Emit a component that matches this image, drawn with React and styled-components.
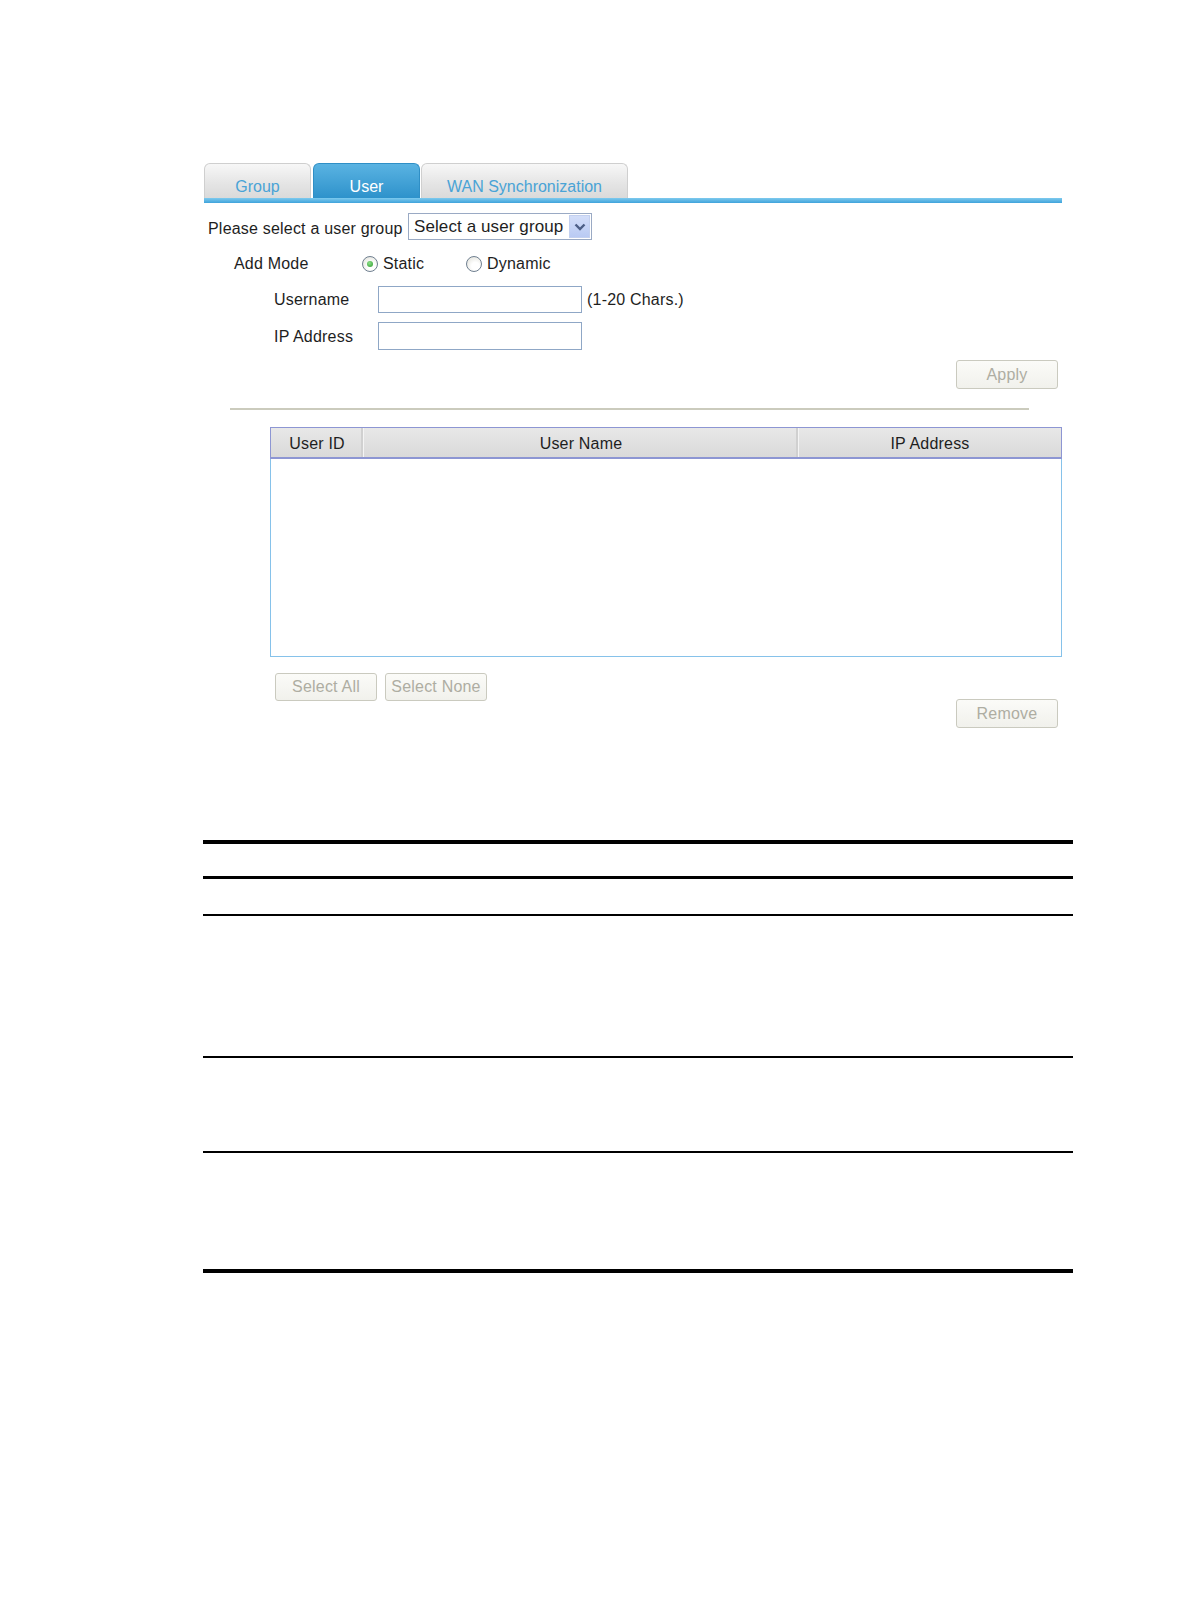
import React from 'react';
import styled, { createGlobalStyle } from 'styled-components';

const Global = createGlobalStyle`
  body {
    margin: 0;
    background: #fff;
    font-family: "Liberation Sans", Arial, sans-serif;
    color: #1e1e1e;
  }
`;

const Page = styled.div`
  padding-top: 163px;
  padding-bottom: 300px;
`;

const Panel = styled.div`
  margin-left: 204px;
  width: 858px;
  font-size: 16px;
  letter-spacing: 0.2px;
`;

const TabBar = styled.div`
  display: flex;
  align-items: flex-end;
  height: 35px;
`;

const Tab = styled.div`
  box-sizing: border-box;
  width: ${p => p.$w}px;
  height: 35px;
  margin-right: ${p => p.$gap || 0}px;
  padding-top: 14px;
  text-align: center;
  letter-spacing: 0;
  border: 1px solid ${p => (p.$active ? '#2f8fc6' : '#cfcfcf')};
  border-bottom: none;
  border-radius: 6px 6px 0 0;
  color: ${p => (p.$active ? '#fff' : '#4aa3d6')};
  background: ${p =>
    p.$active
      ? 'linear-gradient(#5ab3e2, #2e92cb)'
      : 'linear-gradient(#f7f7f7, #e4e4e4 60%, #dadada)'};
`;

const TabLine = styled.div`
  height: 5px;
  background: linear-gradient(#7ecaee, #3fa3db);
`;

const Row = styled.div`
  display: flex;
  align-items: center;
  margin-top: ${p => p.$top}px;
  height: ${p => p.$h}px;
`;

const Label = styled.div`
  margin-left: ${p => p.$left}px;
  width: ${p => p.$w}px;
  padding-top: ${p => p.$pt || 0}px;
  flex-shrink: 0;
  white-space: nowrap;
`;

const Select = styled.div`
  box-sizing: border-box;
  width: 184px;
  height: 27px;
  display: flex;
  align-items: center;
  justify-content: space-between;
  border: 1px solid #9aaac4;
  padding: 1px 1px 1px 5px;
  font-size: 17px;
  letter-spacing: 0.1px;
  background: #fff;
`;

const DropBtn = styled.div`
  width: 21px;
  height: 23px;
  display: flex;
  align-items: center;
  justify-content: center;
  background: linear-gradient(#d3def9, #b9caf3);
  border: 1px solid #c3d0ef;
  box-sizing: border-box;
`;

const RadioItem = styled.label`
  display: flex;
  align-items: center;
  width: ${p => p.$w}px;
  gap: 5px;
`;

const RadioDot = styled.span`
  position: relative;
  box-sizing: border-box;
  width: 16px;
  height: 16px;
  border-radius: 50%;
  border: 1px solid #6f7f90;
  background: radial-gradient(circle at 60% 65%, #fff 30%, #dcdcd4);
  &::after {
    content: '';
    display: ${p => (p.$checked ? 'block' : 'none')};
    position: absolute;
    left: 4px;
    top: 4px;
    width: 6px;
    height: 6px;
    border-radius: 50%;
    background: radial-gradient(circle at 40% 35%, #8ee08a, #2c9a2c);
  }
`;

const TextInput = styled.div`
  box-sizing: border-box;
  width: 204px;
  height: ${p => p.$h || 27}px;
  border: 1px solid #8fa7c6;
  background: #fff;
`;

const Hint = styled.span`
  margin-left: 5px;
`;

const Button = styled.button`
  box-sizing: border-box;
  width: 102px;
  height: ${p => p.$h || 28}px;
  margin-left: ${p => p.$left || 0}px;
  margin-top: ${p => p.$top || 0}px;
  padding: 0;
  font: 16px "Liberation Sans", Arial, sans-serif;
  letter-spacing: 0.2px;
  color: #aeada2;
  background: linear-gradient(#fbfbf8, #f1f1ec);
  border: 1px solid #cacabf;
  border-radius: 3px;
`;

const Divider = styled.div`
  margin: 19px 0 0 26px;
  width: 799px;
  height: 2px;
  background: #cbcbbd;
`;

const Grid = styled.div`
  box-sizing: border-box;
  margin: 17px 0 0 66px;
  width: 792px;
  height: 230px;
  border: 1px solid #86c2ea;
  border-top: none;
`;

const GridHead = styled.div`
  display: grid;
  grid-template-columns: 93px 435px 1fr;
  height: 32px;
  margin: 0 -1px;
  box-sizing: border-box;
  border: 1px solid #8d96d3;
  border-bottom-width: 2px;
  background: linear-gradient(#e8e8e8, #d9d9d9);
`;

const HeadCell = styled.div`
  display: flex;
  align-items: center;
  justify-content: center;
  padding-top: 3px;
  border-right: ${p => (p.$last ? 'none' : '1px solid #f4f4f4')};
  box-shadow: ${p => (p.$last ? 'none' : 'inset -2px 0 0 #d0d0d0')};
`;

const BottomButtons = styled.div`
  display: flex;
  align-items: flex-start;
  margin-top: 16px;
`;

const DocTable = styled.div`
  margin: 112px 0 0 203px;
  width: 870px;
  border-top: 4px solid #000;
  border-bottom: 4px solid #000;
`;

const DocRow = styled.div`
  height: ${p => p.$h}px;
  border-bottom: ${p => (p.$rule ? `${p.$rule}px solid #000` : 'none')};
`;

function Chevron() {
  return (
    <svg width="12" height="8" viewBox="0 0 12 8">
      <path d="M1.5 1.5 L6 6 L10.5 1.5" fill="none" stroke="#4d5f86" strokeWidth="2.4" />
    </svg>
  );
}

export default function App() {
  return (
    <Page>
      <Global />
      <Panel>
        <TabBar>
          <Tab $w={107} $gap={2}>Group</Tab>
          <Tab $w={107} $gap={1} $active>User</Tab>
          <Tab $w={207}>WAN Synchronization</Tab>
        </TabBar>
        <TabLine />

        <Row $top={10} $h={27}>
          <Label $left={4} $w={200} $pt={5}>Please select a user group</Label>
          <Select>
            <span>Select a user group</span>
            <DropBtn><Chevron /></DropBtn>
          </Select>
        </Row>

        <Row $top={14} $h={20}>
          <Label $left={30} $w={128}>Add Mode</Label>
          <RadioItem $w={104}><RadioDot $checked />Static</RadioItem>
          <RadioItem $w={120}><RadioDot />Dynamic</RadioItem>
        </Row>

        <Row $top={12} $h={27}>
          <Label $left={70} $w={104}>Username</Label>
          <TextInput />
          <Hint>(1-20 Chars.)</Hint>
        </Row>

        <Row $top={9} $h={28}>
          <Label $left={70} $w={104} $pt={1}>IP Address</Label>
          <TextInput $h={28} />
        </Row>

        <Row $top={10} $h={29}>
          <Button $h={29} $left={752}>Apply</Button>
        </Row>

        <Divider />

        <Grid>
          <GridHead>
            <HeadCell>User ID</HeadCell>
            <HeadCell>User Name</HeadCell>
            <HeadCell $last>IP Address</HeadCell>
          </GridHead>
        </Grid>

        <BottomButtons>
          <Button $left={71}>Select All</Button>
          <Button $left={8}>Select None</Button>
          <Button $left={469} $top={26} $h={29}>Remove</Button>
        </BottomButtons>
      </Panel>

      <DocTable>
        <DocRow $h={32} $rule={3} />
        <DocRow $h={35} $rule={2} />
        <DocRow $h={140} $rule={2} />
        <DocRow $h={93} $rule={2} />
        <DocRow $h={116} />
      </DocTable>
    </Page>
  );
}
